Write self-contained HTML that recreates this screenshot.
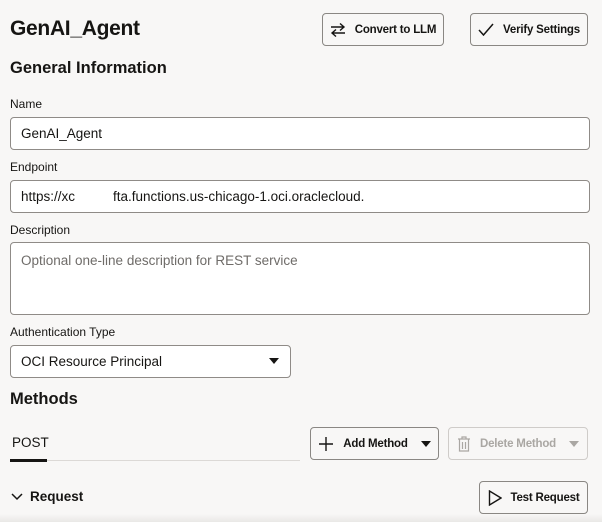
<!DOCTYPE html>
<html><head><style>
*{box-sizing:border-box;margin:0;padding:0}
body{width:602px;height:522px;background:#f8f7f6;font-family:"Liberation Sans",sans-serif;color:#161513;position:relative;overflow:hidden}
.a{position:absolute}
.h1{font-size:21px;font-weight:bold;letter-spacing:-0.3px}
.h2{font-size:16.5px;font-weight:bold}
.lbl{font-size:12px;color:#161513}
.inp{background:#fff;border:1px solid #8f8b87;border-radius:4px;font-size:13.5px;padding-left:10px;display:flex;align-items:center}
.btn{background:#f8f7f6;border:1px solid #8a8783;border-radius:4px;font-size:11.5px;font-weight:bold;display:flex;align-items:center;justify-content:center;gap:9px;letter-spacing:-0.2px}
</style></head><body>
<div class="a h1" style="left:10px;top:17px">GenAI_Agent</div>
<div class="a btn" style="left:322px;top:13px;width:122px;height:33px"><svg width="16" height="14" viewBox="0 0 16 14" fill="none" stroke="#161513" stroke-width="1.4"><path d="M1 4h13M10 0.5l4 3.5-4 3.5M15 10H2M6 6.5L2 10l4 3.5"/></svg>Convert to LLM</div>
<div class="a btn" style="left:470px;top:13px;width:118px;height:33px"><svg width="16" height="13" viewBox="0 0 16 13" fill="none" stroke="#161513" stroke-width="1.5"><path d="M1 7l4.5 5L15 1"/></svg>Verify Settings</div>
<div class="a h2" style="left:10px;top:59px">General Information</div>
<div class="a lbl" style="left:10px;top:97px">Name</div>
<div class="a inp" style="left:10px;top:117px;width:580px;height:33px">GenAI_Agent</div>
<div class="a lbl" style="left:10px;top:160px">Endpoint</div>
<div class="a inp" style="left:10px;top:180px;width:580px;height:33px">https://xc<span style="display:inline-block;width:38px"></span>fta.functions.us-chicago-1.oci.oraclecloud.</div>
<div class="a lbl" style="left:10px;top:223px">Description</div>
<div class="a inp" style="left:10px;top:242px;width:580px;height:73px;align-items:flex-start;padding-top:10px;color:#6f6c69">Optional one-line description for REST service</div>
<div class="a lbl" style="left:10px;top:325px">Authentication Type</div>
<div class="a inp" style="left:10px;top:345px;width:281px;height:33px">OCI Resource Principal<svg class="a" style="left:258px;top:12px" width="10" height="6"><path d="M0 0h10L5 6z" fill="#161513"/></svg></div>
<div class="a h2" style="left:10px;top:390px">Methods</div>
<div class="a" style="left:12px;top:435px;font-size:13.5px">POST</div>
<div class="a" style="left:10px;top:460px;width:290px;height:1px;background:#dcd9d6"></div>
<div class="a" style="left:10px;top:459px;width:37px;height:3px;background:#161513"></div>
<div class="a btn" style="left:310px;top:427px;width:129px;height:33px"><svg width="16" height="16" stroke="#161513" stroke-width="1.4"><path d="M8 1v14M1 8h14"/></svg>Add Method<svg width="10" height="6" style="margin-left:4px"><path d="M0 0h10L5 6z" fill="#161513"/></svg></div>
<div class="a btn" style="left:448px;top:427px;width:140px;height:33px;color:#aaa7a3;border-color:#cfccc9"><svg width="14" height="16" fill="none" stroke="#aaa7a3" stroke-width="1.2"><path d="M1 3h12M5 3V1h4v2M2.5 3v12h9V3M5.5 6v7M8.5 6v7"/></svg>Delete Method<svg width="10" height="6" style="margin-left:4px"><path d="M0 0h10L5 6z" fill="#aaa7a3"/></svg></div>
<svg class="a" style="left:11px;top:493px" width="12" height="8" fill="none" stroke="#161513" stroke-width="1.5"><path d="M1 1l5 5 5-5"/></svg>
<div class="a" style="left:30px;top:489px;font-size:13.5px;font-weight:bold">Request</div>
<div class="a btn" style="left:479px;top:481px;width:109px;height:33px"><svg width="14" height="16" fill="none" stroke="#161513" stroke-width="1.4"><path d="M1.5 1v14L13 8z"/></svg>Test Request</div>
<div class="a" style="left:0;top:514px;width:602px;height:8px;background:linear-gradient(#f8f7f6,#e9e8e6)"></div>
</body></html>
